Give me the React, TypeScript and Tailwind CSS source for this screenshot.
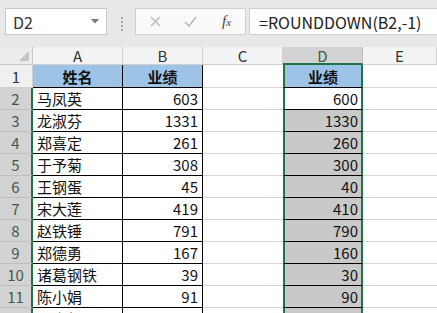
const font = { fontFamily: '"Noto Sans CJK SC", "Noto Sans", sans-serif' }

const data: [string, number | null, number | null][] = [
  ['马凤英', 603, 600],
  ['龙淑芬', 1331, 1330],
  ['郑喜定', 261, 260],
  ['于予菊', 308, 300],
  ['王钢蛋', 45, 40],
  ['宋大莲', 419, 410],
  ['赵铁锤', 791, 790],
  ['郑德勇', 167, 160],
  ['诸葛钢铁', 39, 30],
  ['陈小娟', 91, 90],
  ['周小红', null, null],
]

function Toolbar() {
  return (
    <div className="h-[47px] bg-[#e8e8e8] flex items-start pt-[8px]">
      <div className="ml-[5px] w-[102px] h-[27px] bg-white border border-[#c8c8c8] flex items-center justify-between pl-[7px] pr-[7px]">
        <span className="text-[16px] text-[#333]">D2</span>
        <svg width="8" height="5" viewBox="0 0 8 5">
          <path d="M0 0 L8 0 L4 4.5 Z" fill="#777" />
        </svg>
      </div>
      <div className="ml-[14px] mt-[9px] flex flex-col gap-[2px]">
        <span className="w-[2px] h-[2px] bg-[#a8a8a8]" />
        <span className="w-[2px] h-[2px] bg-[#a8a8a8]" />
        <span className="w-[2px] h-[2px] bg-[#a8a8a8]" />
        <span className="w-[2px] h-[2px] bg-[#a8a8a8]" />
      </div>
      <div className="ml-[12px] w-[111px] h-[27px] bg-[#fafafa] border border-[#d0d0d0] flex items-center">
        <svg className="ml-[14px]" width="11" height="11" viewBox="0 0 11 11">
          <path d="M1 1 L10 10 M10 1 L1 10" stroke="#b8b8b8" strokeWidth="1.3" />
        </svg>
        <svg className="ml-[23px]" width="13" height="11" viewBox="0 0 13 11">
          <path d="M1 6 L5 10 L12 1" stroke="#b8b8b8" strokeWidth="1.6" fill="none" />
        </svg>
        <span className="ml-[25px] text-[15px] italic text-[#444]" style={{ fontFamily: '"Liberation Serif", serif' }}>
          f<span className="text-[11px]">x</span>
        </span>
      </div>
      <div className="ml-[3px] flex-1 h-[27px] bg-white border border-[#d0d0d0] border-r-0 flex items-center pl-[9px]">
        <span className="text-[16px] text-[#222]">=ROUNDDOWN(B2,-1)</span>
      </div>
    </div>
  )
}

export default function App() {
  const cols = ['A', 'B', 'C', 'D', 'E']
  return (
    <div className="w-[437px] h-[313px] overflow-hidden bg-white" style={font}>
      <Toolbar />
      <div className="grid grid-cols-[33px_90px_80px_80px_80px_74px] grid-rows-[18px_23px_repeat(11,22px)] text-[15px] leading-none">
        <div className="bg-[#ececec] border-r border-b border-[#c8c8c8] flex items-end justify-end pr-[3px] pb-[3px]">
          <svg width="10" height="10" viewBox="0 0 10 10">
            <path d="M10 0 L10 10 L0 10 Z" fill="#c4c4c4" />
          </svg>
        </div>
        {cols.map((c) =>
          c === 'D' ? (
            <div key={c} className="bg-[#d3d3d3] border-r border-[#bdbdbd] border-b-2 border-b-[#217346] flex items-center justify-center text-[#3f5a4c]">
              {c}
            </div>
          ) : (
            <div key={c} className="bg-[#f3f3f3] border-r border-b border-[#d0d0d0] flex items-center justify-center text-[#333]">
              {c}
            </div>
          ),
        )}

        <div className="bg-[#f0f0f0] border-r border-b border-[#d0d0d0] flex items-center justify-center text-[#333]">1</div>
        <div className="bg-[#9dc3e6] border-r border-b border-black flex items-center justify-center font-bold text-[#111]">姓名</div>
        <div className="bg-[#9dc3e6] border-r border-b border-black flex items-center justify-center font-bold text-[#111]">业绩</div>
        <div className="border-b border-[#d4d4d4]" />
        <div className="bg-[#9dc3e6] border-l-2 border-r-2 border-[#217346] border-b border-b-black flex items-center justify-center font-bold text-[#111]">业绩</div>
        <div className="border-b border-[#d4d4d4]" />

        {data.map(([name, v, r], i) => (
          <Row key={i} n={i + 2} name={name} v={v} r={r} active={i === 0} />
        ))}
      </div>
    </div>
  )
}

function Row({ n, name, v, r, active }: { n: number; name: string; v: number | null; r: number | null; active: boolean }) {
  return (
    <>
      <div className="bg-[#d3d3d3] border-r-2 border-r-[#217346] border-b border-b-[#bdbdbd] flex items-center justify-center text-[#3f5a4c]">
        {n}
      </div>
      <div className="border-r border-b border-black flex items-center pl-[4px] text-[#111]">{name}</div>
      <div className="border-r border-b border-black flex items-center justify-end pr-[4px] text-[#111]">{v}</div>
      <div className="border-b border-[#d4d4d4]" />
      <div
        className={
          (active ? 'bg-white' : 'bg-[#c9c9c9]') +
          ' border-l-2 border-r-2 border-[#217346] border-b border-b-black flex items-center justify-end pr-[3px] text-[#111]'
        }
      >
        {r}
      </div>
      <div className="border-b border-[#d4d4d4]" />
    </>
  )
}
